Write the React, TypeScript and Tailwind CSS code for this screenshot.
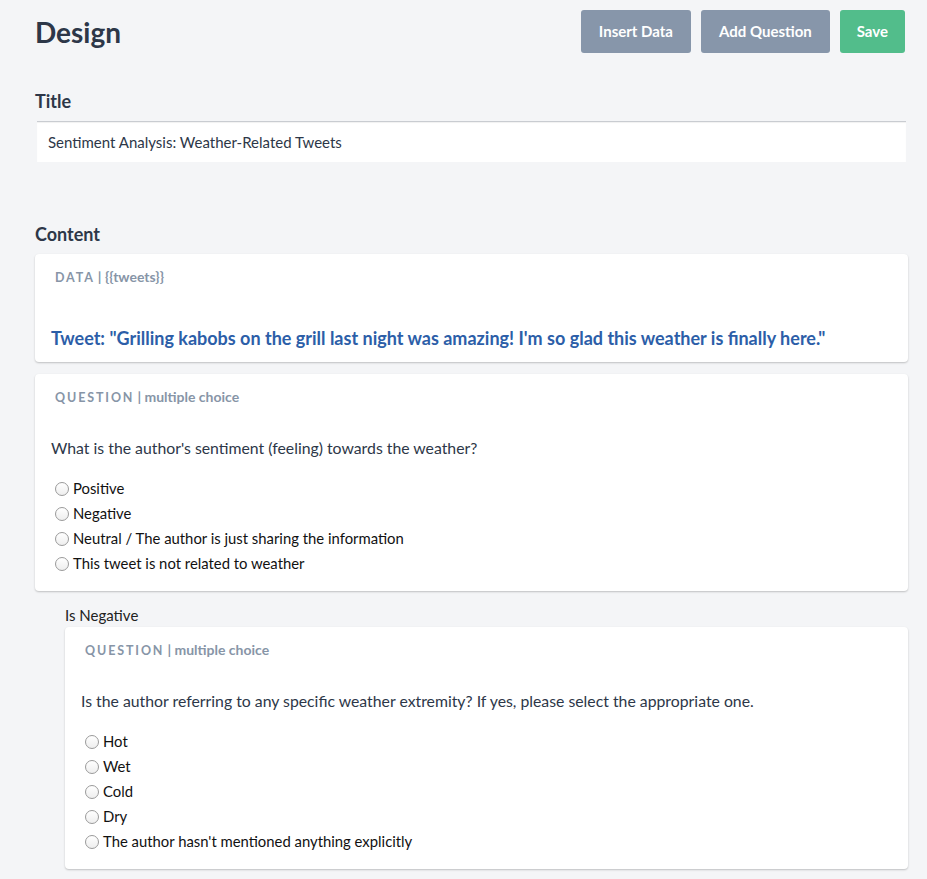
import React from 'react';

const Radio = ({ label }: { label: string }) => (
  <label className="flex items-center h-[25px] text-[14.85px] text-[#111]">
    <span className="w-[14px] h-[14px] rounded-full border border-[#9a9a9a] bg-gradient-to-b from-white to-[#eee] mr-[4px] shrink-0" />
    {label}
  </label>
);

const CardHeader = ({ kind, detail }: { kind: string; detail: string }) => (
  <div className="h-[14px] flex items-baseline pl-[4px] text-[#8795a7] font-bold leading-[14px]">
    <span className="text-[12.5px] tracking-[0.15em]">{kind}</span>
    <span className="text-[14px] font-bold ml-[3px]">| {detail}</span>
  </div>
);

const QuestionCard = ({ question, options }: { question: string; options: string[] }) => (
  <div className="bg-white rounded-[4px] shadow-[0_1px_2px_rgba(0,0,0,0.22)] px-[16px] pt-[16px] pb-[15px]">
    <CardHeader kind="QUESTION" detail="multiple choice" />
    <p className="mt-[32px] text-[15.8px] leading-[24px] text-[#2d3748]">{question}</p>
    <div className="mt-[16px] pl-[4px] flex flex-col">
      {options.map((o) => (
        <Radio key={o} label={o} />
      ))}
    </div>
  </div>
);

export default function App() {
  return (
    <div
      className="min-h-screen bg-[#f4f5f7] pl-[35px] pr-[19px] pt-[10px] pb-[11px]"
      style={{ fontFamily: 'Lato, "Open Sans", sans-serif' }}
    >
      <div className="flex items-center justify-between h-[43px] pr-[3px]">
        <h1 className="text-[28px] font-bold text-[#2d3748] leading-none">Design</h1>
        <div className="flex gap-[10px]">
          <button className="h-[43px] px-[18px] rounded-[3px] bg-[#8796aa] text-white font-bold text-[15px]">Insert Data</button>
          <button className="h-[43px] px-[18px] rounded-[3px] bg-[#8796aa] text-white font-bold text-[15px]">Add Question</button>
          <button className="h-[43px] px-[17px] rounded-[3px] bg-[#52bd8b] text-white font-bold text-[15px]">Save</button>
        </div>
      </div>

      <h2 className="mt-[36px] text-[18px] leading-[24px] font-bold text-[#2d3748]">Title</h2>
      <div className="mt-[8px] mx-[2px] h-[41px] bg-white border-t border-[#c9ccd1] shadow-[inset_0_1px_1px_rgba(0,0,0,0.06)] flex items-center pl-[11px] text-[15px] text-[#2d3748]">
        Sentiment Analysis: Weather-Related Tweets
      </div>

      <h2 className="mt-[60px] text-[18px] leading-[24px] font-bold text-[#2d3748]">Content</h2>
      <div className="mt-[8px] flex flex-col gap-[12px]">
        <div className="bg-white rounded-[4px] shadow-[0_1px_2px_rgba(0,0,0,0.22)] px-[16px] pt-[16px] pb-[10px]">
          <CardHeader kind="DATA" detail="{{tweets}}" />
          <p className="mt-[40px] text-[18px] leading-[28px] font-bold text-[#2c5ea8]">
            Tweet: "Grilling kabobs on the grill last night was amazing! I'm so glad this weather is finally here."
          </p>
        </div>

        <QuestionCard
          question="What is the author's sentiment (feeling) towards the weather?"
          options={[
            'Positive',
            'Negative',
            'Neutral / The author is just sharing the information',
            'This tweet is not related to weather',
          ]}
        />
      </div>

      <div className="pl-[30px]">
        <div className="mt-[14px] text-[15px] leading-[20px] text-[#222]">Is Negative</div>
        <div className="mt-[2px]">
          <QuestionCard
            question="Is the author referring to any specific weather extremity? If yes, please select the appropriate one."
            options={['Hot', 'Wet', 'Cold', 'Dry', "The author hasn't mentioned anything explicitly"]}
          />
        </div>
      </div>
    </div>
  );
}
